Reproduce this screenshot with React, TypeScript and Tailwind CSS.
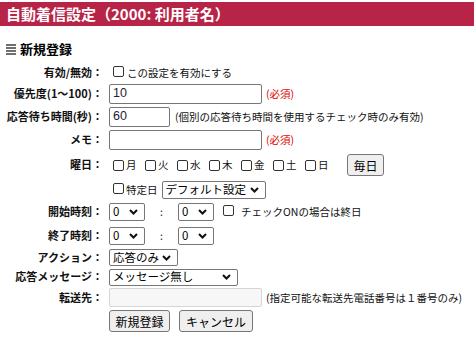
import React from 'react';

const Check = () => (
  <span className="inline-block w-[11px] h-[11px] border border-[#333] rounded-[2px] bg-white shrink-0" />
);

const Chevron = () => (
  <svg width="9" height="6" viewBox="0 0 9 6" className="shrink-0">
    <polyline points="1,1 4.5,4.5 8,1" fill="none" stroke="#111" strokeWidth="2" />
  </svg>
);

function Select({ value, width, height = 18 }: { value: string; width: string; height?: number }) {
  return (
    <div
      className={`${width} flex items-center justify-between border border-[#767676] rounded-[2px] bg-white pl-[3px] pr-[6px] text-[11.5px] text-black leading-none`}
      style={{ height }}
    >
      <span>{value}</span>
      <Chevron />
    </div>
  );
}

function Row({ label, h, children }: { label: string; h: string; children?: React.ReactNode }) {
  return (
    <div className={`flex items-center ${h}`}>
      <div className="w-[103px] shrink-0 text-right text-[11px] font-bold text-[#111] whitespace-nowrap">{label}</div>
      <div className="pl-[6px] flex items-center text-[10.5px] text-[#111] whitespace-nowrap">{children}</div>
    </div>
  );
}

const Required = () => <span className="ml-[4px] text-[#e00000] text-[10.5px]">(必須)</span>;

const Btn = ({ children, w }: { children: React.ReactNode; w: string }) => (
  <div className={`${w} h-[22px] flex items-center justify-center bg-[#efefef] border border-[#767676] rounded-[3px] text-[12px] text-black`}>
    {children}
  </div>
);

const days = ['月', '火', '水', '木', '金', '土', '日'];

export default function App() {
  return (
    <div className="w-[474px] h-[338px] bg-white overflow-hidden font-['Noto_Sans_CJK_JP','Noto_Sans',sans-serif] leading-tight">
      {/* Title bar */}
      <div className="mt-[2px] h-[24px] bg-[#b72447] pl-[6px] flex items-center text-white font-bold text-[15px]">
        自動着信設定（2000: 利用者名）
      </div>

      {/* Section heading */}
      <div className="mt-[16px] h-[14px] pl-[6px] flex items-center gap-[4px]">
        <div className="w-[10px] flex flex-col gap-[1px]">
          <div className="h-[2px] bg-[#6f6f6f]" />
          <div className="h-[2px] bg-[#6f6f6f]" />
          <div className="h-[2px] bg-[#6f6f6f]" />
          <div className="h-[2px] bg-[#6f6f6f]" />
        </div>
        <span className="text-[13px] font-bold text-black">新規登録</span>
      </div>

      <div className="mt-[6px] flex flex-col">
        <Row label="有効/無効：" h="h-[21px]">
          <span className="ml-[4px] mr-[3px]"><Check /></span>
          <span>この設定を有効にする</span>
        </Row>

        <Row label="優先度(1〜100)：" h="h-[22px]">
          <div className="w-[153px] h-[20px] border border-[#767676] rounded-[2px] pl-[3px] flex items-center text-[12.5px] text-[#2a1838] font-['Liberation_Sans',sans-serif]">
            10
          </div>
          <Required />
        </Row>

        <Row label="応答待ち時間(秒)：" h="h-[23px]">
          <div className="w-[61px] h-[20px] border border-[#767676] rounded-[2px] pl-[3px] flex items-center text-[12.5px] text-[#2a1838] font-['Liberation_Sans',sans-serif]">
            60
          </div>
          <span className="ml-[5px]">(個別の応答待ち時間を使用するチェック時のみ有効)</span>
        </Row>

        <Row label="メモ：" h="h-[23px]">
          <div className="w-[153px] h-[20px] border border-[#767676] rounded-[2px]" />
          <Required />
        </Row>

        <Row label="曜日：" h="h-[28px]">
          <div className="flex items-center">
            {days.map((d) => (
              <div key={d} className="w-[32px] flex items-center pl-[4px] gap-[2px]">
                <Check />
                <span>{d}</span>
              </div>
            ))}
          </div>
          <div className="ml-[14px]">
            <Btn w="w-[37px]">毎日</Btn>
          </div>
        </Row>

        <Row label="" h="h-[21px]">
          <span className="ml-[4px] mr-[2px]"><Check /></span>
          <span className="mr-[4px]">特定日</span>
          <Select value="デフォルト設定" width="w-[104px]" />
        </Row>

        <Row label="開始時刻：" h="h-[24px]">
          <Select value="0" width="w-[36px]" />
          <span className="w-[33px] text-center">:</span>
          <Select value="0" width="w-[36px]" />
          <span className="ml-[9px] mr-[7px]"><Check /></span>
          <span>チェックONの場合は終日</span>
        </Row>

        <Row label="終了時刻：" h="h-[24px]">
          <Select value="0" width="w-[36px]" />
          <span className="w-[33px] text-center">:</span>
          <Select value="0" width="w-[36px]" />
        </Row>

        <Row label="アクション：" h="h-[19px]">
          <Select value="応答のみ" width="w-[69px]" height={17} />
        </Row>

        <Row label="応答メッセージ：" h="h-[20px]">
          <Select value="メッセージ無し" width="w-[129px]" height={17} />
        </Row>

        <Row label="転送先：" h="h-[21px]">
          <div className="w-[153px] h-[19px] border border-[#d6d6d6] bg-[#f7f7f7] rounded-[2px]" />
          <span className="ml-[4px]">(指定可能な転送先電話番号は１番号のみ)</span>
        </Row>

        <Row label="" h="h-[26px]">
          <Btn w="w-[61px]">新規登録</Btn>
          <div className="ml-[9px]">
            <Btn w="w-[74px]">キャンセル</Btn>
          </div>
        </Row>
      </div>
    </div>
  );
}
